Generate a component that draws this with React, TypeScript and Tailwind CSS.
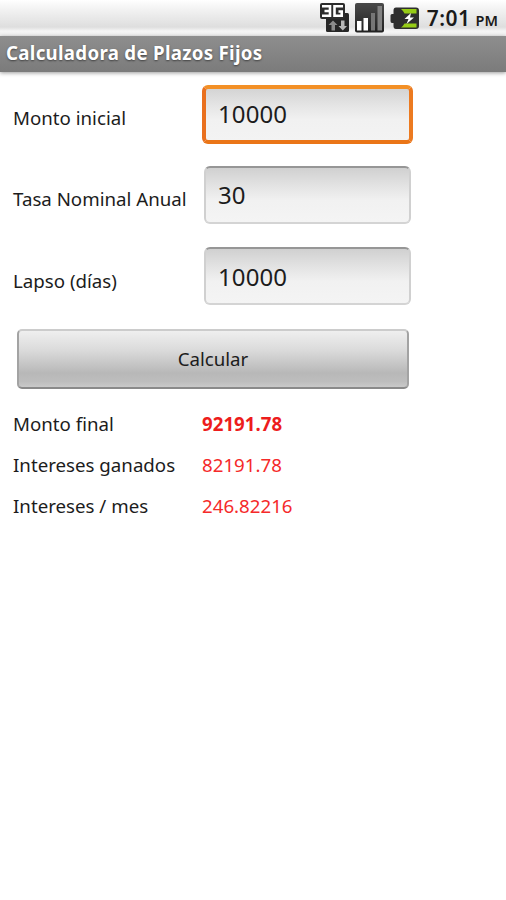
import { useState, FormEvent } from 'react';

type Field = 'monto' | 'tasa' | 'lapso';

const fields: { id: Field; label: string }[] = [
  { id: 'monto', label: 'Monto inicial' },
  { id: 'tasa', label: 'Tasa Nominal Anual' },
  { id: 'lapso', label: 'Lapso (días)' },
];

function NetworkIcon() {
  return (
    <svg width="30" height="31" viewBox="0 0 30 31">
      <rect x="6" y="13" width="23" height="17" rx="1.5" fill="#262626" />
      <rect x="22" y="11" width="7" height="6" rx="1.5" fill="#262626" />
      <rect x="0" y="1" width="25" height="16" rx="2" fill="#2c2c2c" />
      <path
        d="M2 4.2H10V13.8H2M4.500 9H10M23 4.200H14.500V13.800H21.700V9.500H18.500"
        fill="none"
        stroke="#fff"
        strokeWidth="2.600"
      />
      <path d="M8.500 23L13 18.500L17.500 23H15V28.500H11.500V23Z" fill="#8c8c8c" />
      <path d="M18.500 24H21V18.500H24.500V24H27L22.800 28.500Z" fill="#b8b8b8" />
    </svg>
  );
}

function SignalIcon() {
  return (
    <svg width="30" height="30" viewBox="0 0 30 30">
      <defs>
        <linearGradient id="signal" x1="0" y1="0" x2="0" y2="1">
          <stop offset="0" stopColor="#4a4a4a" />
          <stop offset="1" stopColor="#202020" />
        </linearGradient>
      </defs>
      <rect x="0" y="0" width="29" height="29.5" rx="2" fill="url(#signal)" />
      <rect x="2" y="18" width="4.5" height="9.5" fill="#fff" />
      <rect x="8.5" y="15" width="4.5" height="12.5" fill="#fff" />
      <rect x="16" y="10" width="4" height="17.5" fill="#767676" />
      <rect x="22.5" y="3" width="4.5" height="24.5" fill="#828282" />
    </svg>
  );
}

function BatteryIcon() {
  return (
    <svg width="30" height="23" viewBox="0 0 30 23">
      <path
        d="M6 0.5H26Q29 0.5 29 3.5V19Q29 22 26 22H6Q3.5 22 3.5 19V16H2Q0.5 16 0.5 14V8.5Q0.5 7 2 7H3.5V3.5Q3.5 0.5 6 0.5Z"
        fill="#2e2e2e"
      />
      <path d="M11 2H26.500V6.500H14.500Q13.500 4 11 2Z" fill="#96cc16" />
      <path d="M11 20.500H26.500V16.500H14.500Q13.500 18.500 11 20.500Z" fill="#96cc16" />
      <path d="M21 6L14.500 12H18.500L16.500 17L24 10.500H20Z" fill="#fff" />
    </svg>
  );
}

export default function App() {
  const [values, setValues] = useState<Record<Field, string>>({
    monto: '10000',
    tasa: '30',
    lapso: '10000',
  });
  const [active, setActive] = useState<Field>('monto');
  const [result, setResult] = useState({ final: '92191.78', ganados: '82191.78', mes: '246.82216' });

  const handleSubmit = (e: FormEvent) => {
    e.preventDefault();
    const monto = Number(values.monto);
    const dias = Number(values.lapso);
    const interes = (monto * Number(values.tasa) * dias) / 36500;
    setResult({
      final: (monto + interes).toFixed(2),
      ganados: interes.toFixed(2),
      mes: dias ? ((interes / dias) * 30.03).toFixed(5) : '0',
    });
  };

  return (
    <div className="h-[900px] w-[506px] overflow-hidden bg-white font-['Noto_Sans',sans-serif] text-[18.7px] text-[#1c1c1c]">
      {/* Status bar */}
      <div className="flex h-9 items-start justify-end bg-[linear-gradient(#fff_0px,#f4f4f4_8px,#dedede_27px,#f5f5f5_31px,#f2f2f2_35px)] pr-2">
        <div className="mt-[2px]">
          <NetworkIcon />
        </div>
        <div className="mt-[3px] ml-[5px]">
          <SignalIcon />
        </div>
        <div className="mt-[7px] ml-[5px]">
          <BatteryIcon />
        </div>
        <div className="mt-[3px] ml-[7px] flex items-baseline leading-[30px] font-semibold text-[#1a1a1a]">
          <span className="text-[21px] tracking-[0.5px]">7:01</span>
          <span className="ml-[5px] text-[14.5px]">PM</span>
        </div>
      </div>

      {/* Titulo */}
      <h1 className="h-9 bg-linear-to-b from-[#8e8e8e] to-[#7b7b7b] pl-[6px] text-[18.7px] leading-[33px] font-bold tracking-[0.29px] text-white shadow-[0_1px_4px_rgba(0,0,0,0.4)] [text-shadow:0_1px_2px_rgba(0,0,0,0.5)]">
        Calculadora de Plazos Fijos
      </h1>

      <form onSubmit={handleSubmit} className="w-[416px] pt-[13px]">
        {fields.map(f => (
          <label key={f.id} className="flex h-[81.5px]">
            <span className="w-[202px] shrink-0 pt-[19.5px] pl-[13px] leading-[26px] whitespace-nowrap">
              {f.label}
            </span>
            <input
              type="text"
              value={values[f.id]}
              onFocus={() => setActive(f.id)}
              onChange={e => setValues({ ...values, [f.id]: e.target.value })}
              className={
                active === f.id
                  ? 'h-[59px] w-[211px] rounded-[6px] border-4 border-t-[#f39026] border-r-[#ec7a20] border-b-[#ea7517] border-l-[#e9701e] bg-[linear-gradient(#d4d4d4,#e6e6e6_35%,#f1f1f1_60%,#f3f3f3)] px-[12px] pb-[2px] text-2xl tracking-[0.1px] outline-none'
                  : 'mt-[-0.6px] ml-[2px] h-[58px] w-[207px] rounded-[6px] border-2 border-t-[#969696] border-r-[#d0d0d0] border-b-[#d4d4d4] border-l-[#d0d0d0] bg-[linear-gradient(#d0d0d0,#e4e4e4_35%,#f1f1f1_60%,#f4f4f4)] px-[12px] text-2xl tracking-[0.1px] outline-none'
              }
            />
          </label>
        ))}

        <button
          type="submit"
          className="mt-[-1px] ml-[17px] block h-[60px] w-[392px] rounded-[5px] border-2 border-t-[#cccccc] border-r-[#a3a3a3] border-b-[#8a8a8a] border-l-[#a3a3a3] bg-[linear-gradient(#efefef,#dadada_35%,#b8b8b8_75%,#bdbdbd_90%,#c9c9c9)] pt-px"
        >
          Calcular
        </button>
      </form>

      {/* Resultados */}
      <div className="mt-[14px] grid grid-cols-[189px_1fr] auto-rows-[41.2px] pl-[13px] leading-[41px]">
        <span>Monto final</span>
        <span className="font-bold text-[#ed1c1c]">{result.final}</span>
        <span>Intereses ganados</span>
        <span className="text-[#f52a2a]">{result.ganados}</span>
        <span>Intereses / mes</span>
        <span className="text-[#f52a2a]">{result.mes}</span>
      </div>
    </div>
  );
}
